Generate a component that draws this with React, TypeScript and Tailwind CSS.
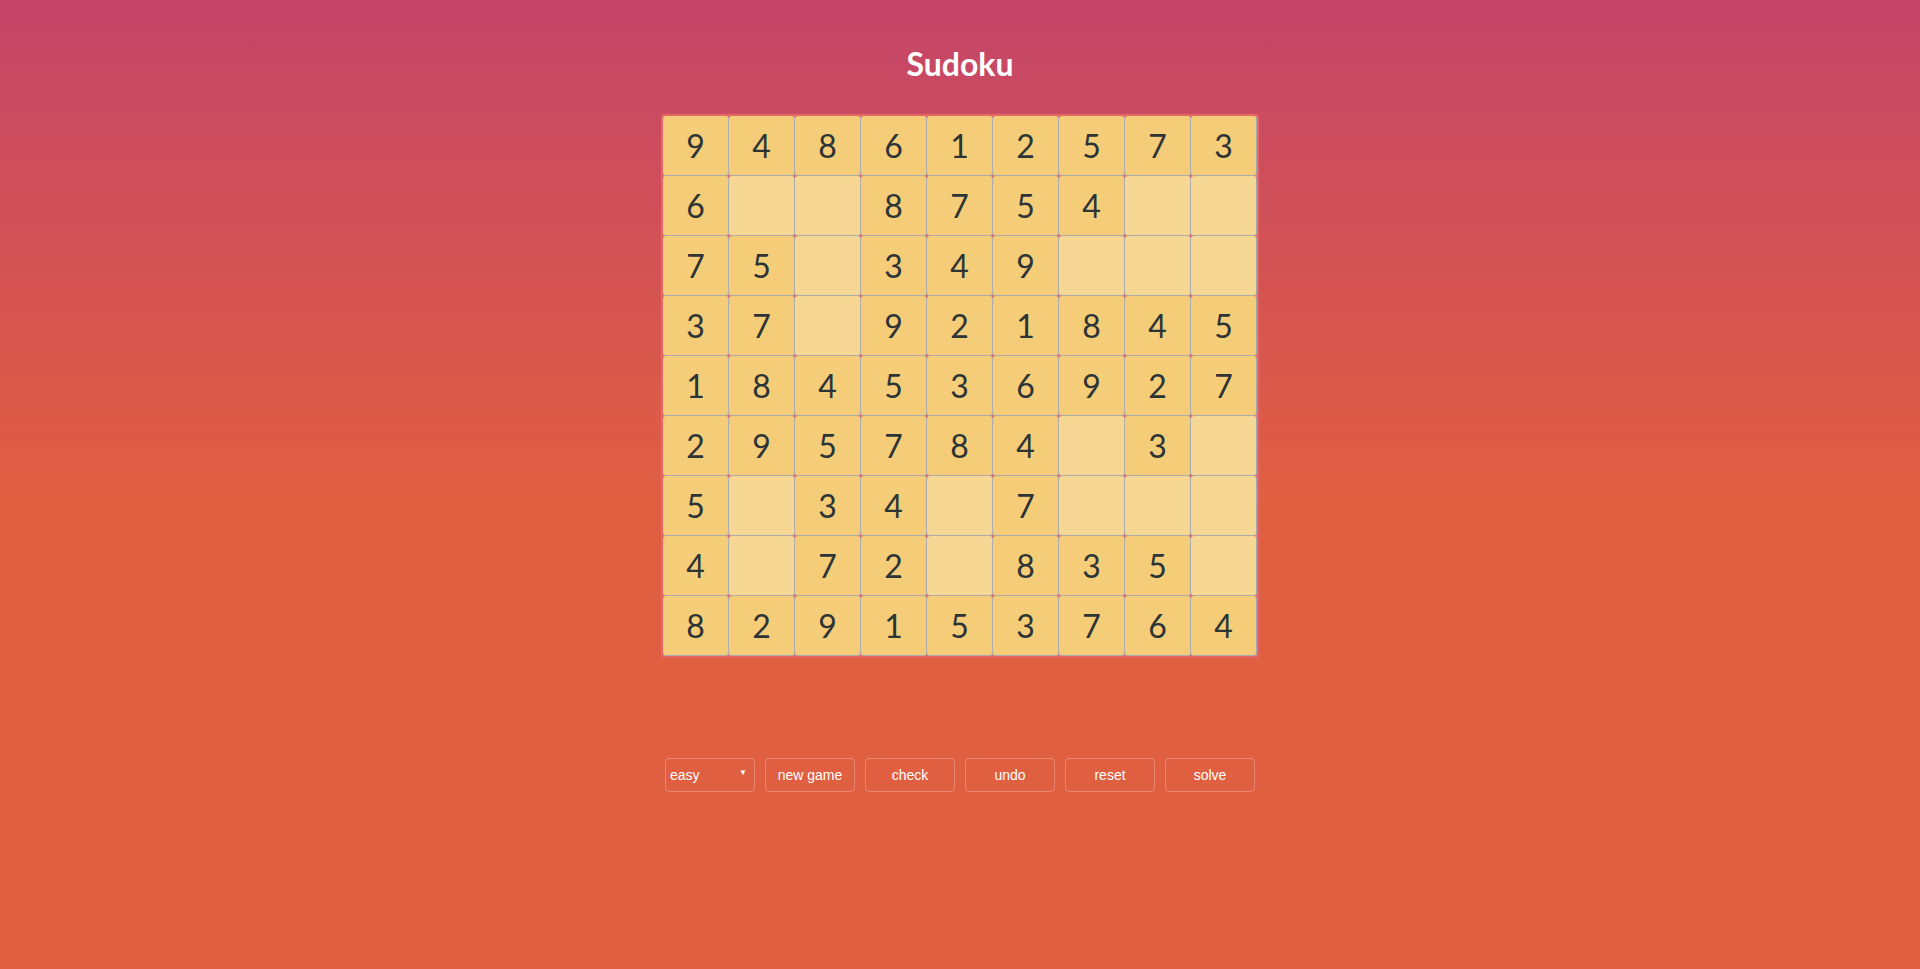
import { useState } from "react";

const PUZZLE = [
  "948612573",
  "6..8754..",
  "75.349...",
  "37.921845",
  "184536927",
  "295784.3.",
  "5.34.7...",
  "4.72.835.",
  "829153764",
];

const BUTTONS = ["new game", "check", "undo", "reset", "solve"];

export default function App() {
  const [level, setLevel] = useState("easy");

  return (
    <div
      className="flex h-screen w-full flex-col items-center overflow-hidden bg-[linear-gradient(to_bottom,#c44569_0%,#e15f41_52%,#e15f41_100%)]"
      style={{ fontFamily: "Lato, 'Noto Sans', sans-serif" }}
    >
      <h1 className="mt-[43px] text-[32px] leading-[42px] font-bold text-white">Sudoku</h1>

      <div className="mt-[29px] rounded-[3px] bg-[#e66767] p-[2px]">
        {PUZZLE.map((row, r) => (
          <div key={r} className="flex">
            {row.split("").map((ch, c) => {
              const empty = ch === ".";
              return (
                <div
                  key={c}
                  className={`flex h-[60px] w-[66px] items-center justify-center rounded-[3px] border-b border-r border-[#acacaf] text-[32px] font-normal text-[#2d3436] ${
                    empty ? "bg-[#f7d794]" : "bg-[#f5cd79]"
                  }`}
                >
                  {empty ? "" : ch}
                </div>
              );
            })}
          </div>
        ))}
      </div>

      <div
        className="mt-[100px] flex gap-[10px] text-[14px] text-white"
        style={{ fontFamily: "'Liberation Sans', Arial, sans-serif" }}
      >
        <div className="relative h-[34px] w-[90px]">
          <select
            value={level}
            onChange={(e) => setLevel(e.target.value)}
            className="h-full w-full appearance-none rounded-[4px] border border-white/25 bg-transparent pl-[4px] text-white outline-none"
          >
            <option value="easy">easy</option>
            <option value="medium">medium</option>
            <option value="hard">hard</option>
          </select>
          <span className="pointer-events-none absolute right-[8px] top-[11px] text-[8px] leading-[8px] text-white">▼</span>
        </div>
        {BUTTONS.map((b) => (
          <button
            key={b}
            type="button"
            className="h-[34px] w-[90px] rounded-[4px] border border-white/25 bg-transparent text-white"
          >
            {b}
          </button>
        ))}
      </div>
    </div>
  );
}
